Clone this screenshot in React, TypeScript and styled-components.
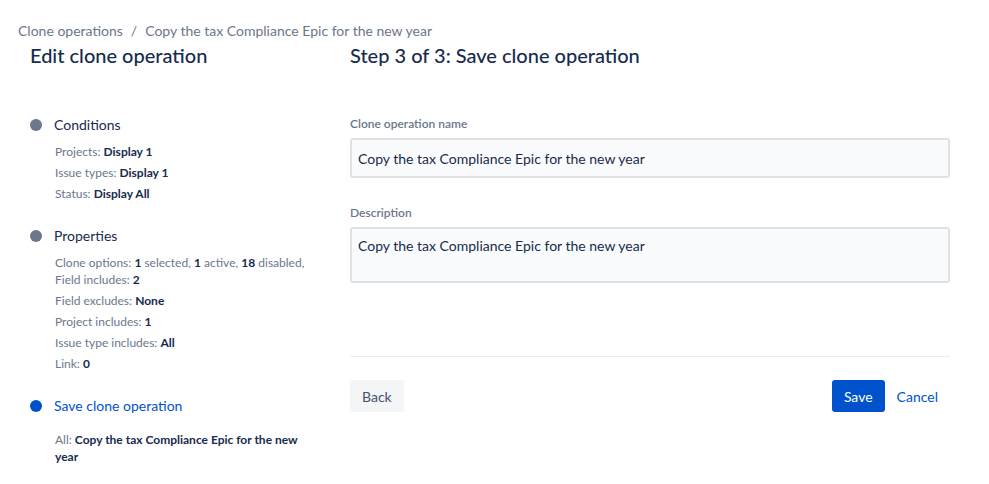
import React from "react";
import styled, { createGlobalStyle } from "styled-components";

const GlobalStyle = createGlobalStyle`
  body {
    margin: 0;
    background: #fff;
    font-family: "Segoe UI", Lato, "Noto Sans", sans-serif;
    color: #172b4d;
  }
`;

const Page = styled.div`
  width: 989px;
  height: 484px;
  padding: 22px 0 0 18px;
  box-sizing: border-box;
`;

const Breadcrumbs = styled.div`
  font-size: 14px;
  color: #6b778c;
  line-height: 18px;
`;

const Sep = styled.span`
  margin: 0 8px;
`;

const Columns = styled.div`
  display: grid;
  grid-template-columns: 320px 600px;
  padding-left: 12px;
`;

const Heading = styled.h1`
  margin: 3px 0 0;
  font-size: 20px;
  font-weight: 500;
  line-height: 24px;
  color: #172b4d;
`;

const Steps = styled.ul`
  list-style: none;
  margin: 48px 0 0;
  padding: 0;
  display: flex;
  flex-direction: column;
  gap: 24px;
`;

const Step = styled.li`
  display: flex;
  flex-direction: column;
`;

const StepTitle = styled.div<{ $active?: boolean }>`
  display: flex;
  align-items: center;
  gap: 12px;
  font-size: 14px;
  line-height: 20px;
  color: ${({ $active }) => ($active ? "#0052cc" : "#172b4d")};
`;

const Dot = styled.span<{ $active?: boolean }>`
  width: 12px;
  height: 12px;
  border-radius: 50%;
  background: ${({ $active }) => ($active ? "#0052cc" : "#6b778c")};
  flex-shrink: 0;
`;

const Details = styled.div<{ $gap?: number }>`
  display: flex;
  flex-direction: column;
  gap: 4px;
  margin: ${({ $gap }) => $gap ?? 8}px 0 0 25px;
  padding-right: 40px;
`;

const Detail = styled.div`
  font-size: 12px;
  line-height: 17px;
  color: #6b778c;

  b {
    color: #172b4d;
    font-weight: 700;
  }
`;

const Form = styled.div`
  display: flex;
  flex-direction: column;
  margin-top: 49px;
`;

const Label = styled.label`
  display: block;
  font-size: 12px;
  font-weight: 600;
  color: #6b778c;
  line-height: 16px;
  margin-bottom: 6px;
`;

const Field = styled.div`
  margin-bottom: 27px;

  &:last-child {
    margin-bottom: 0;
  }
`;

const Input = styled.input`
  width: 100%;
  box-sizing: border-box;
  height: 40px;
  padding: 0 6px;
  border: 2px solid #dfe1e6;
  border-radius: 3px;
  background: #fafbfc;
  font: inherit;
  font-size: 14px;
  color: #172b4d;
`;

const TextArea = styled.textarea`
  width: 100%;
  box-sizing: border-box;
  height: 56px;
  padding: 7px 6px;
  border: 2px solid #dfe1e6;
  border-radius: 3px;
  background: #fafbfc;
  font: inherit;
  font-size: 14px;
  line-height: 20px;
  color: #172b4d;
  resize: none;
  display: block;
`;

const Divider = styled.hr`
  border: 0;
  border-top: 1px solid #ebecf0;
  margin: 73px 0 23px;
`;

const Actions = styled.div`
  display: flex;
  align-items: center;
`;

const Spacer = styled.div`
  flex: 1;
`;

const Button = styled.button<{ $kind?: "default" | "primary" | "link" }>`
  height: 32px;
  padding: 0 12px;
  border: 0;
  border-radius: 3px;
  font: inherit;
  font-size: 14px;
  cursor: pointer;
  background: ${({ $kind }) =>
    $kind === "primary" ? "#0052cc" : $kind === "link" ? "transparent" : "#f4f5f7"};
  color: ${({ $kind }) =>
    $kind === "primary" ? "#fff" : $kind === "link" ? "#0052cc" : "#42526e"};
`;

const name = "Copy the tax Compliance Epic for the new year";

export default function App() {
  return (
    <Page>
      <GlobalStyle />
      <Breadcrumbs>
        Clone operations<Sep>/</Sep>
        {name}
      </Breadcrumbs>
      <Columns>
        <div>
          <Heading>Edit clone operation</Heading>
          <Steps>
            <Step>
              <StepTitle>
                <Dot />
                Conditions
              </StepTitle>
              <Details>
                <Detail>
                  Projects: <b>Display 1</b>
                </Detail>
                <Detail>
                  Issue types: <b>Display 1</b>
                </Detail>
                <Detail>
                  Status: <b>Display All</b>
                </Detail>
              </Details>
            </Step>
            <Step>
              <StepTitle>
                <Dot />
                Properties
              </StepTitle>
              <Details>
                <Detail>
                  Clone options: <b>1</b> selected, <b>1</b> active, <b>18</b>{" "}
                  disabled, Field includes: <b>2</b>
                </Detail>
                <Detail>
                  Field excludes: <b>None</b>
                </Detail>
                <Detail>
                  Project includes: <b>1</b>
                </Detail>
                <Detail>
                  Issue type includes: <b>All</b>
                </Detail>
                <Detail>
                  Link: <b>0</b>
                </Detail>
              </Details>
            </Step>
            <Step>
              <StepTitle $active>
                <Dot $active />
                Save clone operation
              </StepTitle>
              <Details $gap={15}>
                <Detail>
                  All: <b>{name}</b>
                </Detail>
              </Details>
            </Step>
          </Steps>
        </div>
        <div>
          <Heading>Step 3 of 3: Save clone operation</Heading>
          <Form>
            <Field>
              <Label>Clone operation name</Label>
              <Input defaultValue={name} />
            </Field>
            <Field>
              <Label>Description</Label>
              <TextArea defaultValue={name} />
            </Field>
          </Form>
          <Divider />
          <Actions>
            <Button>Back</Button>
            <Spacer />
            <Button $kind="primary">Save</Button>
            <Button $kind="link">Cancel</Button>
          </Actions>
        </div>
      </Columns>
    </Page>
  );
}
